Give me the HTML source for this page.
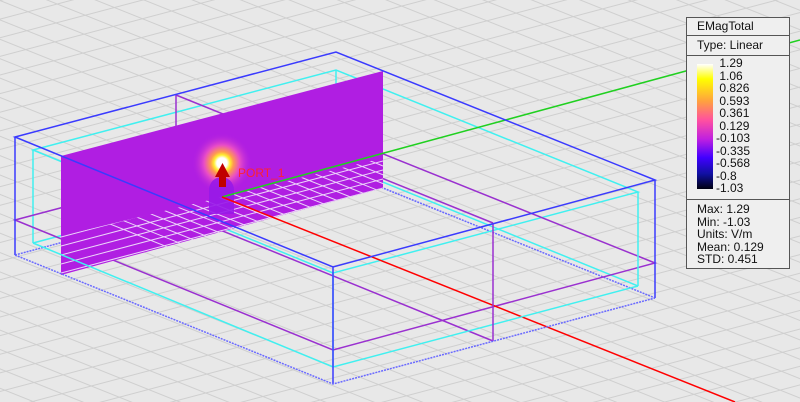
<!DOCTYPE html>
<html><head><style>
body{margin:0;width:800px;height:402px;overflow:hidden;background:#e8e8e8;font-family:"Liberation Sans",sans-serif}
svg{position:absolute;left:0;top:0}
.lg{position:absolute;left:686px;top:17px;width:102px;height:250px;border:1px solid #555;background:#efefef;font-size:12px;color:#111}
.row{border-bottom:1px solid #555;height:17px;line-height:17px;padding-left:10px}
</style></head><body>
<svg width="800" height="402" viewBox="0 0 800 402">
<defs>
<pattern id="g1" width="18" height="18" patternUnits="userSpaceOnUse" patternTransform="rotate(-14.8)"><line x1="0" y1="0.5" x2="18" y2="0.5" stroke="#cfcfcf" stroke-width="1"/></pattern>
<pattern id="g2" width="18" height="18" patternUnits="userSpaceOnUse" patternTransform="rotate(21.8)"><line x1="0" y1="0.5" x2="18" y2="0.5" stroke="#cfcfcf" stroke-width="1"/></pattern>
<radialGradient id="glow" cx="222" cy="163" r="30" gradientUnits="userSpaceOnUse">
<stop offset="0" stop-color="#fff"/><stop offset="0.17" stop-color="#fff"/><stop offset="0.27" stop-color="#ffee30"/><stop offset="0.38" stop-color="#ff9a50"/><stop offset="0.6" stop-color="#e84cc8"/><stop offset="1" stop-color="#b020e0" stop-opacity="0"/></radialGradient>
<linearGradient id="cb" x1="0" y1="0" x2="0" y2="1">
<stop offset="0" stop-color="#ffffff"/><stop offset="0.12" stop-color="#ffff00"/><stop offset="0.3" stop-color="#ffa040"/><stop offset="0.45" stop-color="#ff50a0"/><stop offset="0.6" stop-color="#c020e0"/><stop offset="0.75" stop-color="#4000ff"/><stop offset="0.88" stop-color="#1010a0"/><stop offset="1" stop-color="#000010"/></linearGradient>
<clipPath id="fl"><polygon points="61,236 383,158 383,188 61,275"/></clipPath>
</defs>
<rect width="800" height="402" fill="#e8e8e8"/>
<rect width="800" height="402" fill="url(#g1)"/>
<rect width="800" height="402" fill="url(#g2)"/>
<g fill="none" stroke-width="1.5">
<polyline points="15,255 336,169 655,298" stroke="#6a6aff" stroke-dasharray="2,1"/>
<polyline points="33,243 336,163 638,286" stroke="#40f0f0"/>
<polygon points="33,150 336,70 638,192 333,273" stroke="#40f0f0"/>
<line x1="33" y1="150" x2="33" y2="243" stroke="#40f0f0"/>
<line x1="336" y1="70" x2="336" y2="163" stroke="#40f0f0"/>
<polygon points="15,220 336,135 655,263 333,350" stroke="#9a30d0"/>
<line x1="176" y1="95" x2="493" y2="223" stroke="#9a30d0"/>
<line x1="176" y1="212" x2="493" y2="341" stroke="#9a30d0"/>
<line x1="176" y1="95" x2="176" y2="212" stroke="#9a30d0"/>
</g>
<polygon points="61,156 383,71 383,188 61,275" fill="#b01ee2"/>
<polygon points="61,156 383,71 383,188 61,275" fill="url(#glow)"/>
<g clip-path="url(#fl)" stroke="#ecd4fa" stroke-width="1" fill="none">
<line x1="61" y1="237" x2="383" y2="152"/>
<line x1="61" y1="246" x2="383" y2="161"/>
<line x1="61" y1="255" x2="383" y2="170"/>
<line x1="61" y1="264" x2="383" y2="179"/>
<line x1="61" y1="273" x2="383" y2="188"/>
<line x1="-200" y1="100" x2="300" y2="300"/>
<line x1="-178" y1="100" x2="322" y2="300"/>
<line x1="-156" y1="100" x2="344" y2="300"/>
<line x1="-134" y1="100" x2="366" y2="300"/>
<line x1="-112" y1="100" x2="388" y2="300"/>
<line x1="-90" y1="100" x2="410" y2="300"/>
<line x1="-68" y1="100" x2="432" y2="300"/>
<line x1="-46" y1="100" x2="454" y2="300"/>
<line x1="-24" y1="100" x2="476" y2="300"/>
<line x1="-2" y1="100" x2="498" y2="300"/>
<line x1="20" y1="100" x2="520" y2="300"/>
<line x1="42" y1="100" x2="542" y2="300"/>
<line x1="64" y1="100" x2="564" y2="300"/>
<line x1="86" y1="100" x2="586" y2="300"/>
<line x1="108" y1="100" x2="608" y2="300"/>
<line x1="130" y1="100" x2="630" y2="300"/>
<line x1="152" y1="100" x2="652" y2="300"/>
<line x1="174" y1="100" x2="674" y2="300"/>
<line x1="196" y1="100" x2="696" y2="300"/>
<line x1="218" y1="100" x2="718" y2="300"/>
<line x1="240" y1="100" x2="740" y2="300"/>
<line x1="262" y1="100" x2="762" y2="300"/>
<line x1="284" y1="100" x2="784" y2="300"/>
<line x1="306" y1="100" x2="806" y2="300"/>
<line x1="328" y1="100" x2="828" y2="300"/>
</g>
<path d="M209,190 A12.5,13 0 0 1 234,190 L234,214 L209,214 Z" fill="#9818e8" opacity="0.9"/>
<line x1="222" y1="197" x2="800" y2="40" stroke="#20d020" stroke-width="1.5"/>
<line x1="222" y1="197" x2="735" y2="402" stroke="#ff0000" stroke-width="1.5"/>
<rect x="219" y="176" width="7" height="11" fill="#c00000"/>
<polygon points="215,177 222.5,163 230,177" fill="#c00000"/>
<g fill="none" stroke="#40f0f0" stroke-width="1.5">
<line x1="333" y1="273" x2="333" y2="367"/><line x1="638" y1="192" x2="638" y2="286"/>
<polyline points="33,243 333,367 638,286"/>
</g>
<line x1="493" y1="223" x2="493" y2="341" stroke="#9a30d0" stroke-width="1.5"/>
<g fill="none" stroke="#3a3aff" stroke-width="1.5">
<polygon points="15,137 336,52 655,180 333,267"/>
<line x1="15" y1="137" x2="15" y2="255"/><line x1="333" y1="267" x2="333" y2="384"/><line x1="655" y1="180" x2="655" y2="298"/>
</g>
<polyline points="15,255 333,384 655,298" fill="none" stroke="#6a6aff" stroke-width="1.5" stroke-dasharray="2,1"/>
<text x="238" y="177" font-size="12" fill="#ff2030" font-family="Liberation Sans,sans-serif">PORT_1</text>
</svg>
<div class="lg">
<div class="row">EMagTotal</div>
<div class="row" style="height:19px;line-height:19px">Type: Linear</div>
<div style="position:relative;height:143px;border-bottom:1px solid #555">
<svg width="20" height="130" style="left:10px;top:8px"><rect x="0" y="0" width="16" height="125" fill="url(#cb)"/></svg>
<div style="position:absolute;left:29px;top:1px;line-height:12.5px">
<div>&nbsp;1.29</div><div>&nbsp;1.06</div><div>&nbsp;0.826</div><div>&nbsp;0.593</div><div>&nbsp;0.361</div><div>&nbsp;0.129</div><div>-0.103</div><div>-0.335</div><div>-0.568</div><div>-0.8</div><div>-1.03</div></div>
</div>
<div style="padding:3px 0 0 10px;line-height:12.5px">Max: 1.29<br>Min: -1.03<br>Units: V/m<br>Mean: 0.129<br>STD: 0.451</div>
</div>
</body></html>
